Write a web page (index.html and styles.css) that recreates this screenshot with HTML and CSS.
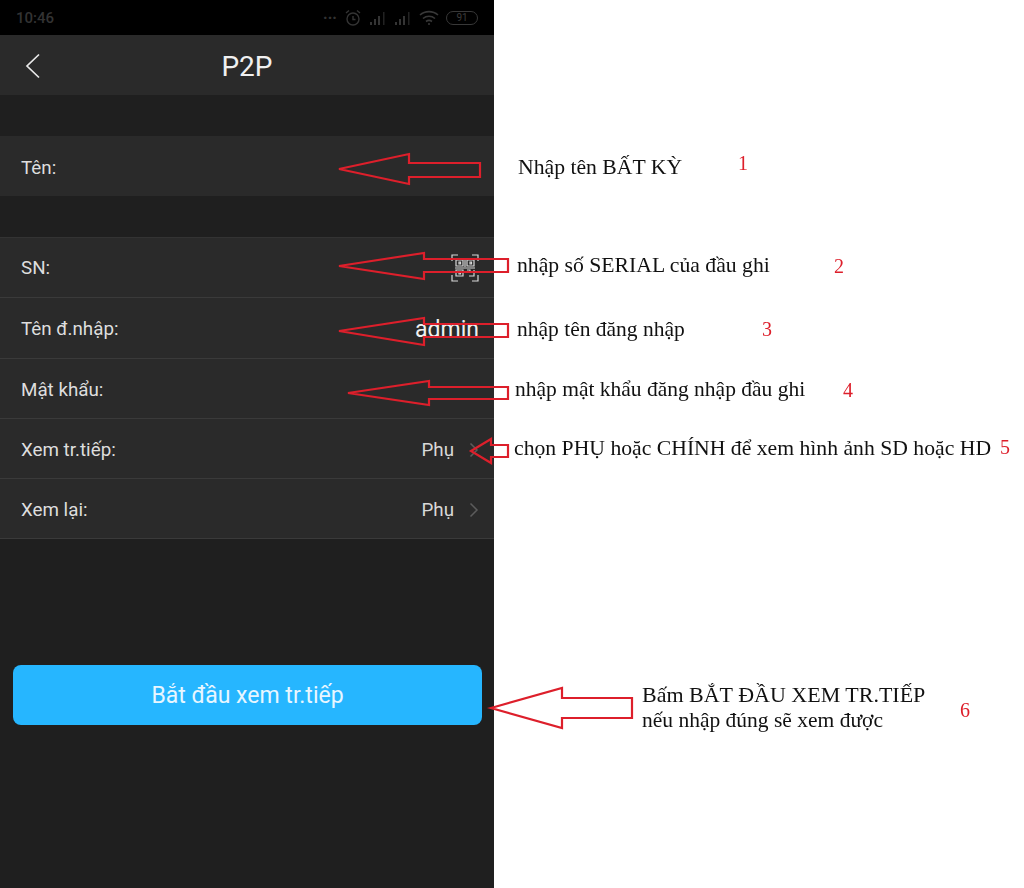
FILE: index.html
```html
<!DOCTYPE html>
<html>
<head>
    <meta charset="utf-8">
    <link rel="stylesheet" href="styles.css">
</head>
<body>
    <div class="page">
        <!-- Phone screen -->
        <div class="phone">
            <div class="status-bar">
                <span class="clock">10:46</span>
                <div class="status-icons">
                    <span class="dots">...</span>
                    <svg width="18" height="18" viewBox="0 0 18 18" fill="none" stroke="#343434" stroke-width="1.4">
                        <circle cx="9" cy="10" r="6"/>
                        <path d="M9 7v3.5h2.5M2 4l3-2.5M16 4l-3-2.5"/>
                    </svg>
                    <svg class="signal" width="18" height="14" viewBox="0 0 18 14" fill="#343434">
                        <rect x="1" y="11" width="2" height="3"/><rect x="5" y="8" width="2" height="6"/><rect x="9" y="5" width="2" height="9"/><rect x="14" y="1" width="1.5" height="13" fill="#222"/>
                    </svg>
                    <svg class="signal" width="18" height="14" viewBox="0 0 18 14" fill="#343434">
                        <rect x="1" y="11" width="2" height="3"/><rect x="5" y="8" width="2" height="6"/><rect x="9" y="5" width="2" height="9"/><rect x="14" y="1" width="1.5" height="13" fill="#222"/>
                    </svg>
                    <svg width="20" height="16" viewBox="0 0 20 16" fill="none" stroke="#383838" stroke-width="1.6">
                        <path d="M1 5c5-4.500 13-4.500 18 0M4 8.500c3.500-3 8.500-3 12 0M7 11.500c1.800-1.300 4.200-1.300 6 0"/>
                        <circle cx="10" cy="14" r="1" fill="#383838" stroke="none"/>
                    </svg>
                    <span class="battery">91</span>
                </div>
            </div>

            <div class="title-bar">
                <svg class="back" width="16" height="26" viewBox="0 0 16 26" fill="none" stroke="#e8e8e8" stroke-width="1.700">
                    <path d="M14 1.500L2 13l12 11.500"/>
                </svg>
                <span class="title">P2P</span>
            </div>

            <div class="group">
                <div class="row row-plain"><span>Tên:</span></div>
            </div>

            <div class="group">
                <div class="row">
                    <span>SN:</span>
                    <svg class="scan" width="28" height="28" viewBox="0 0 28 28" fill="none" stroke="#d8d8d8" stroke-width="1.200">
                        <path d="M1 7V1h6M21 1h6v6M27 21v6h-6M7 27H1v-6"/>
                        <path d="M5 6h7v6H5zM16 6h7v6h-7zM5 16h7v6H5z"/>
                        <path d="M8 8h1.500v2H8zM19 8h1.500v2H19zM8 18h1.500v2H8zM16 16h3v3M23 16v6h-5M14 5v8M4 14h20"/>
                    </svg>
                </div>
                <div class="row row-tall"><span>Tên đ.nhập:</span><span class="value-big">admin</span></div>
                <div class="row"><span>Mật khẩu:</span></div>
                <div class="row">
                    <span>Xem tr.tiếp:</span>
                    <span class="value">Phụ
                        <svg class="chevron" width="10" height="16" viewBox="0 0 10 16" fill="none" stroke="#5c5c5c" stroke-width="1.500"><path d="M1.500 1.500L8 8l-6.500 6.500"/></svg>
                    </span>
                </div>
                <div class="row">
                    <span>Xem lại:</span>
                    <span class="value">Phụ
                        <svg class="chevron" width="10" height="16" viewBox="0 0 10 16" fill="none" stroke="#5c5c5c" stroke-width="1.500"><path d="M1.500 1.500L8 8l-6.500 6.500"/></svg>
                    </span>
                </div>
            </div>

            <button class="start-button">Bắt đầu xem tr.tiếp</button>
        </div>

        <!-- Notes next to the screen -->
        <div class="notes">
            <span class="note" style="left: 24px; top: 155px;">Nhập tên BẤT KỲ</span>
            <span class="num" style="left: 244px; top: 151px;">1</span>
            <span class="note" style="left: 23px; top: 253px;">nhập số SERIAL của đầu ghi</span>
            <span class="num" style="left: 340px; top: 254px;">2</span>
            <span class="note note-small" style="left: 23px; top: 317px;">nhập tên đăng nhập</span>
            <span class="num" style="left: 268px; top: 317px;">3</span>
            <span class="note note-small" style="left: 21px; top: 377px;">nhập mật khẩu đăng nhập đầu ghi</span>
            <span class="num" style="left: 349px; top: 378px;">4</span>
            <span class="note" style="left: 20px; top: 436px;">chọn PHỤ hoặc CHÍNH để xem hình ảnh SD hoặc HD</span>
            <span class="num" style="left: 506px; top: 435px;">5</span>
            <span class="note note-wide" style="left: 148px; top: 682px;">Bấm BẮT ĐẦU XEM TR.TIẾP<br><span class="note-small">nếu nhập đúng sẽ xem được</span></span>
            <span class="num" style="left: 466px; top: 698px;">6</span>
        </div>

        <!-- Red arrows drawn over everything -->
        <svg class="arrows" width="1024" height="888" viewBox="0 0 1024 888" fill="none" stroke="#dd1f2b" stroke-width="2.200">
            <path d="M339 169L409 154V163H480V177H409V184Z"/>
            <path d="M339 266L424 253V259H508V272H424V279Z"/>
            <path d="M339 331L424 318V324H508V337H424V345Z"/>
            <path d="M348 393L429 381V387H508V399H429V405Z"/>
            <path d="M471 451L491 439V445H508V457H491V463Z"/>
            <path d="M491 708L562 688V698H632V718H562V728Z"/>
        </svg>
    </div>
</body>
</html>
```

FILE: styles.css
```css
body {
    margin: 0;
    background: #fff;
    font-family: 'Roboto', 'Liberation Sans', sans-serif;
}

/* the source picture is a soft, rescaled photo of a phone */
.page {
    display: flex;
    position: relative;
    width: 1024px;
    height: 888px;
    overflow: hidden;
    filter: blur(0.4px);
}

/* Phone screen */
.phone {
    width: 494px;
    height: 888px;
    background: #1f1f1f;
    color: #e6e6e6;
    box-sizing: border-box;
}

.status-bar {
    height: 35px;
    background: #000;
    display: flex;
    align-items: center;
    justify-content: space-between;
    padding: 0 16px;
}

.clock {
    color: #333;
    font-size: 15px;
    font-weight: 500;
}

.status-icons {
    display: flex;
    align-items: center;
    gap: 7px;
}

.dots {
    color: #333;
    font-size: 16px;
    font-weight: 700;
    margin-top: -8px;
}

.battery {
    width: 30px;
    height: 12px;
    border: 1px solid #383838;
    border-radius: 7px;
    color: #3c3c3c;
    font-size: 10px;
    line-height: 12px;
    text-align: center;
}

.title-bar {
    height: 60px;
    box-sizing: border-box;
    padding-top: 2px;
    background: #2a2a2a;
    display: flex;
    align-items: center;
    justify-content: center;
    position: relative;
}

.back {
    position: absolute;
    left: 25px;
    top: 18px;
}

.title {
    font-size: 28px;
    color: #f0f0f0;
}

.group {
    margin-top: 41px;
}

.row {
    height: 60px;
    box-sizing: border-box;
    background: #2a2a2a;
    border-bottom: 1px solid #3a3a3a;
    display: flex;
    align-items: center;
    justify-content: space-between;
    padding: 2px 15px 0 21px;
    font-size: 18.8px;
    color: #dedede;
}

.row-tall {
    height: 61px;
}

.group .row:first-child {
    height: 61px;
    padding-top: 0;
    border-top: 1px solid #333;
}

.group .row-plain:first-child {
    height: 60px;
    padding-top: 3px;
    border: none;
}

.value {
    display: flex;
    align-items: center;
    gap: 15px;
    color: #d8d8d8;
}

.value-big {
    font-size: 23px;
    color: #f0f0f0;
}

.start-button {
    display: block;
    width: 469px;
    height: 60px;
    margin: 126px 0 0 13px;
    background: #26b6ff;
    border: none;
    border-radius: 8px;
    color: #e8f6ff;
    font-family: inherit;
    font-size: 23px;
}

/* Notes */
.notes {
    flex: 1;
    position: relative;
    font-family: 'Liberation Serif', serif;
    color: #111;
}

.note {
    position: absolute;
    font-size: 21.7px;
    line-height: 24px;
    white-space: nowrap;
}

.note-wide {
    font-size: 22px;
    line-height: 25px;
}

.note-small {
    font-size: 21.5px;
}

.num {
    position: absolute;
    font-size: 20px;
    line-height: 24px;
    color: #dd1f2b;
}

.arrows {
    position: absolute;
    left: 0;
    top: 0;
    pointer-events: none;
}
```
